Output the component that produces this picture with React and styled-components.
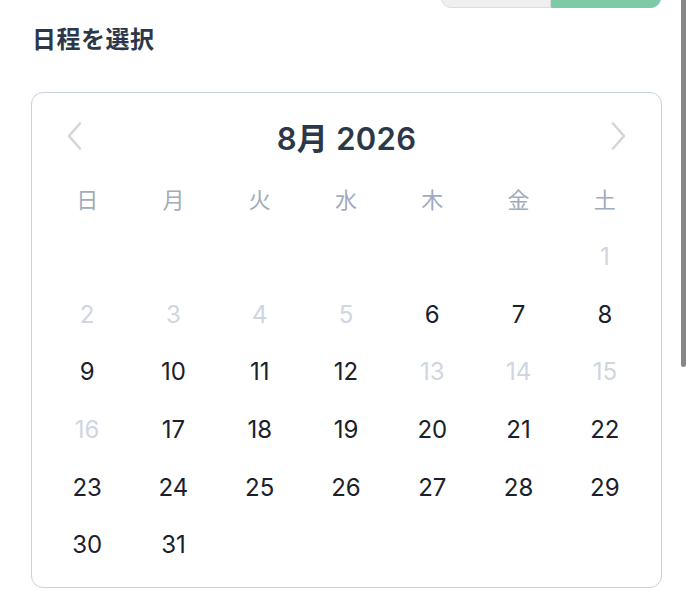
import React from "react";
import styled, { createGlobalStyle } from "styled-components";

const Global = createGlobalStyle`
  html, body { margin: 0; padding: 0; background: #ffffff; }
  body { font-family: Inter, "Noto Sans CJK JP", sans-serif; overflow: hidden; }
`;

const Page = styled.div`
  position: relative;
  width: 692px;
  height: 600px;
  box-sizing: border-box;
  padding: 0 30px 0 31px;
  display: flex;
  flex-direction: column;
`;

const ButtonBar = styled.div`
  display: flex;
  justify-content: flex-end;
  height: 8px;
  margin-top: -12px;
  padding-right: 1px;
`;

const TopButton = styled.div`
  width: 110px;
  height: 20px;
  box-sizing: border-box;
  background: ${(p) => (p.$primary ? "#7ecaa8" : "#efefef")};
  border: 1px solid ${(p) => (p.$primary ? "#7ecaa8" : "#dcdcdc")};
  border-radius: ${(p) => (p.$primary ? "0 0 10px 0" : "0 0 0 10px")};
`;

const Title = styled.h2`
  margin: 27px 0 0 1px;
  font-family: "Noto Sans CJK JP", sans-serif;
  font-size: 24px;
  font-weight: 700;
  color: #2d3748;
  line-height: 30px;
  letter-spacing: 0.5px;
`;

const Calendar = styled.div`
  margin-top: 39px;
  border: 1.5px solid #c9d2dd;
  border-radius: 12px;
  padding: 18px 13px 13px 12px;
  display: flex;
  flex-direction: column;
`;

const Header = styled.div`
  display: flex;
  align-items: center;
  justify-content: space-between;
  height: 50px;
  padding: 0 18px 0 19px;
`;

const MonthLabel = styled.div`
  font-family: Inter, "Noto Sans CJK JP", sans-serif;
  font-size: 31px;
  font-weight: 600;
  color: #2d3748;
  letter-spacing: 0.3px;
`;

const NavButton = styled.button`
  border: none;
  background: none;
  padding: 0;
  width: 24px;
  height: 30px;
  display: flex;
  align-items: center;
  justify-content: center;
`;

const Grid = styled.div`
  margin-top: 7px;
  display: grid;
  grid-template-columns: repeat(7, 1fr);
  grid-template-rows: 60px;
  grid-auto-rows: 57.6px;
`;

const WeekDay = styled.div`
  display: flex;
  align-items: center;
  justify-content: center;
  font-family: "Noto Sans CJK JP", sans-serif;
  font-size: 22px;
  color: #a0abbd;
`;

const Day = styled.div`
  display: flex;
  align-items: center;
  justify-content: center;
  font-family: Inter, sans-serif;
  font-size: 24px;
  font-weight: 400;
  color: ${(p) => (p.$disabled ? "#cfd6e0" : "#1a202c")};
`;

const ScrollThumb = styled.div`
  position: absolute;
  top: -6px;
  left: 681px;
  width: 5px;
  height: 373px;
  background: #878787;
  border-radius: 3px;
`;

const Chevron = ({ dir }) => (
  <svg width="18" height="30" viewBox="0 0 18 30" fill="none">
    <path
      d={dir === "left" ? "M14 2.5 L3 15 L14 27.5" : "M4 2.5 L15 15 L4 27.5"}
      stroke="#d6d6d6"
      strokeWidth="2.6"
      strokeLinecap="round"
      strokeLinejoin="round"
    />
  </svg>
);

const weekdays = ["日", "月", "火", "水", "木", "金", "土"];
const disabledDays = new Set([1, 2, 3, 4, 5, 13, 14, 15, 16]);

export default function App() {
  const cells = [];
  for (let i = 0; i < 6; i++) cells.push(<div key={"e" + i} />);
  for (let d = 1; d <= 31; d++) {
    cells.push(
      <Day key={d} $disabled={disabledDays.has(d)}>
        {d}
      </Day>
    );
  }
  return (
    <>
      <Global />
      <Page>
        <ButtonBar>
          <TopButton />
          <TopButton $primary />
        </ButtonBar>
        <Title>日程を選択</Title>
        <Calendar>
          <Header>
            <NavButton aria-label="前の月">
              <Chevron dir="left" />
            </NavButton>
            <MonthLabel>8月 2026</MonthLabel>
            <NavButton aria-label="次の月">
              <Chevron dir="right" />
            </NavButton>
          </Header>
          <Grid>
            {weekdays.map((w) => (
              <WeekDay key={w}>{w}</WeekDay>
            ))}
            {cells}
          </Grid>
        </Calendar>
        <ScrollThumb />
      </Page>
    </>
  );
}
